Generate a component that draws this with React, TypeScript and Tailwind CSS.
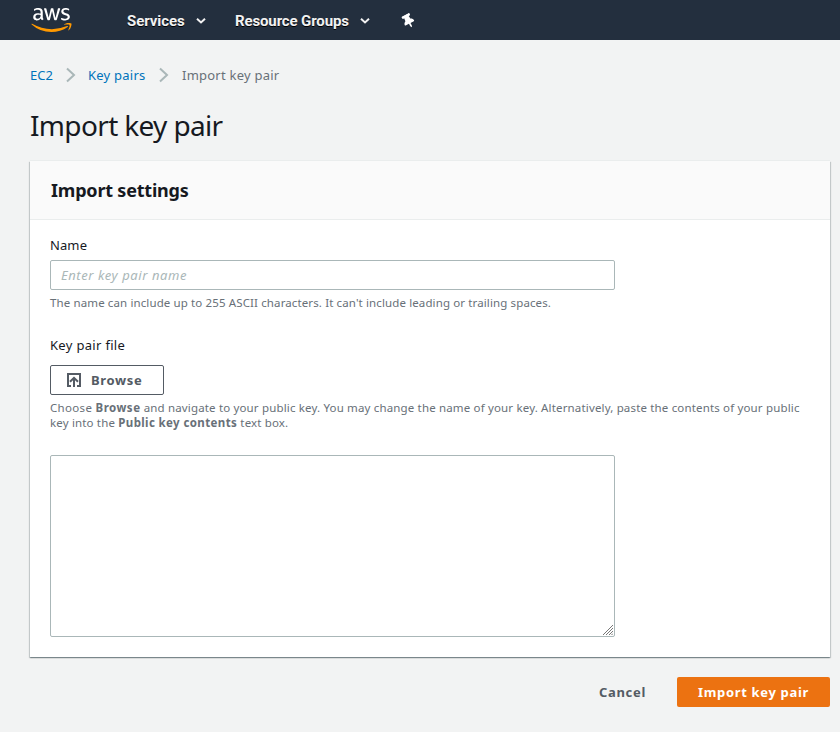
import React from "react";
import { FaAws, FaThumbtack } from "react-icons/fa";

function AwsLogo() {
  return (
    <>
      <svg className="absolute size-0" aria-hidden="true">
        <defs>
          <linearGradient id="aws-fill" x1="0" y1="0" x2="0" y2="1">
            <stop offset="0.56" stopColor="#ffffff" />
            <stop offset="0.56" stopColor="#ff9900" />
          </linearGradient>
        </defs>
      </svg>
      <FaAws className="h-[32px] w-[41px] shrink-0" fill="url(#aws-fill)" />
    </>
  );
}

function Caret() {
  return (
    <svg className="h-[6px] w-[10px] shrink-0" viewBox="0 0 10 6" fill="none" stroke="#f2f2f2" strokeWidth="2">
      <path d="M1 0.8 5 4.4 9 0.8" />
    </svg>
  );
}

function Chevron() {
  return (
    <svg className="h-4 w-[10px] shrink-0" viewBox="0 0 10 16" fill="none" stroke="#aab7b8" strokeWidth="2">
      <path d="M1 1.5 8 8 1 14.5" />
    </svg>
  );
}

function UploadIcon() {
  return (
    <svg className="mr-[10px] h-[14px] w-[14px] shrink-0" viewBox="0 0 14 14" fill="none" stroke="#545b64" strokeWidth="2">
      <path d="M4 13H1V1h12v12h-3" />
      <path d="M7 14V5M3 8.8l4-4 4 4" />
    </svg>
  );
}

function ResizeGrip() {
  return (
    <svg className="absolute bottom-[2px] right-[2px] h-[10px] w-[10px]" viewBox="0 0 10 10" fill="none" stroke="#777777" strokeWidth="1">
      <path d="M0 10 10 0M3 10 10 3M6 10 10 6M8.5 10 10 8.5" />
    </svg>
  );
}

export default function App() {
  return (
    <div className="h-[732px] w-[840px] overflow-hidden bg-[#f2f3f3] font-['Noto_Sans',sans-serif] text-[13px] leading-[20px] text-[#16191f]">
      <header className="flex h-10 items-center bg-[#232f3e] pl-[31px] font-['Roboto',sans-serif] text-[15px] font-bold text-[#f2f2f2] [text-shadow:0_1px_0_#000]">
        <AwsLogo />
        <div className="ml-[55px] flex w-[108px] items-center gap-[11px] whitespace-nowrap pt-px">
          <span className="w-[58px] tracking-[-0.05px]">Services</span>
          <Caret />
        </div>
        <div className="flex w-[167px] items-center gap-[11px] whitespace-nowrap pt-px">
          <span className="w-[114px] tracking-[-0.13px]">Resource Groups</span>
          <Caret />
        </div>
        <FaThumbtack className="mt-px h-[14px] w-[13px] -rotate-[28deg] text-white" />
      </header>

      <main className="pl-[30px] pr-[10px]">
        <nav className="flex h-[70px] items-center whitespace-nowrap tracking-[0.23px] text-[#0073bb]">
          <span className="w-[36px] tracking-normal">EC2</span>
          <Chevron />
          <span className="ml-3 w-[71px]">Key pairs</span>
          <Chevron />
          <span className="ml-[13px] text-[#687078]">Import key pair</span>
        </nav>
        <h1 className="h-[51px] text-[28px] leading-[30px] tracking-[-0.65px]">Import key pair</h1>

        <section className="h-[496px] bg-white shadow-[0_1px_1px_0_rgba(0,28,36,0.3),1px_1px_1px_0_rgba(0,28,36,0.15),-1px_1px_1px_0_rgba(0,28,36,0.15),0_-1px_0_0_#eaeded]">
          <div className="flex h-[59px] items-center border-b border-[#eaeded] bg-[#fafafa] px-[21px]">
            <h2 className="text-[18px] font-bold tracking-[-0.2px]">Import settings</h2>
          </div>
          <div className="px-5 pt-[15px]">
            <label className="block h-[25px] tracking-[0.1px]">Name</label>
            <input
              className="block h-[30px] w-[565px] rounded-[2px] border border-[#aab7b8] bg-white px-[10px] tracking-[0.58px] placeholder:italic placeholder:text-[#aab7b8]"
              placeholder="Enter key pair name"
            />
            <p className="mt-[5px] h-[40px] whitespace-nowrap text-[11.5px] leading-[15px] tracking-[0.12px] text-[#687078]">
              The name can include up to 255 ASCII characters. It can't include leading or trailing spaces.
            </p>
            <label className="block h-[30px] tracking-[0.32px]">Key pair file</label>
            <button className="flex h-[30px] w-[114px] items-center rounded-[2px] border border-[#545b64] bg-white pl-[16px] font-bold tracking-[0.65px] text-[#545b64]">
              <UploadIcon />
              Browse
            </button>
            <p className="mt-[5px] h-[55px] whitespace-nowrap text-[11.5px] leading-[15px] tracking-[0.16px] text-[#687078]">
              <span className="tracking-[0.32px]">Choose </span>
              <b className="tracking-[0.5px]">Browse</b> and navigate to your public key. You may change the name of your key. Alternatively, paste the contents of your public
              <br />
              key into the <b className="tracking-[0.38px]">Public key contents</b> text box.
            </p>
            <div className="relative h-[182px] w-[565px]">
              <textarea className="block h-full w-full resize-none rounded-[2px] border border-[#aab7b8] bg-white" />
              <ResizeGrip />
            </div>
          </div>
        </section>

        <footer className="mt-5 flex items-center justify-end font-bold tracking-[0.67px]">
          <button className="h-[30px] w-[109px] text-[#545b64]">Cancel</button>
          <button className="h-[30px] w-[153px] rounded-[2px] bg-[#ec7211] text-white">Import key pair</button>
        </footer>
      </main>
    </div>
  );
}
